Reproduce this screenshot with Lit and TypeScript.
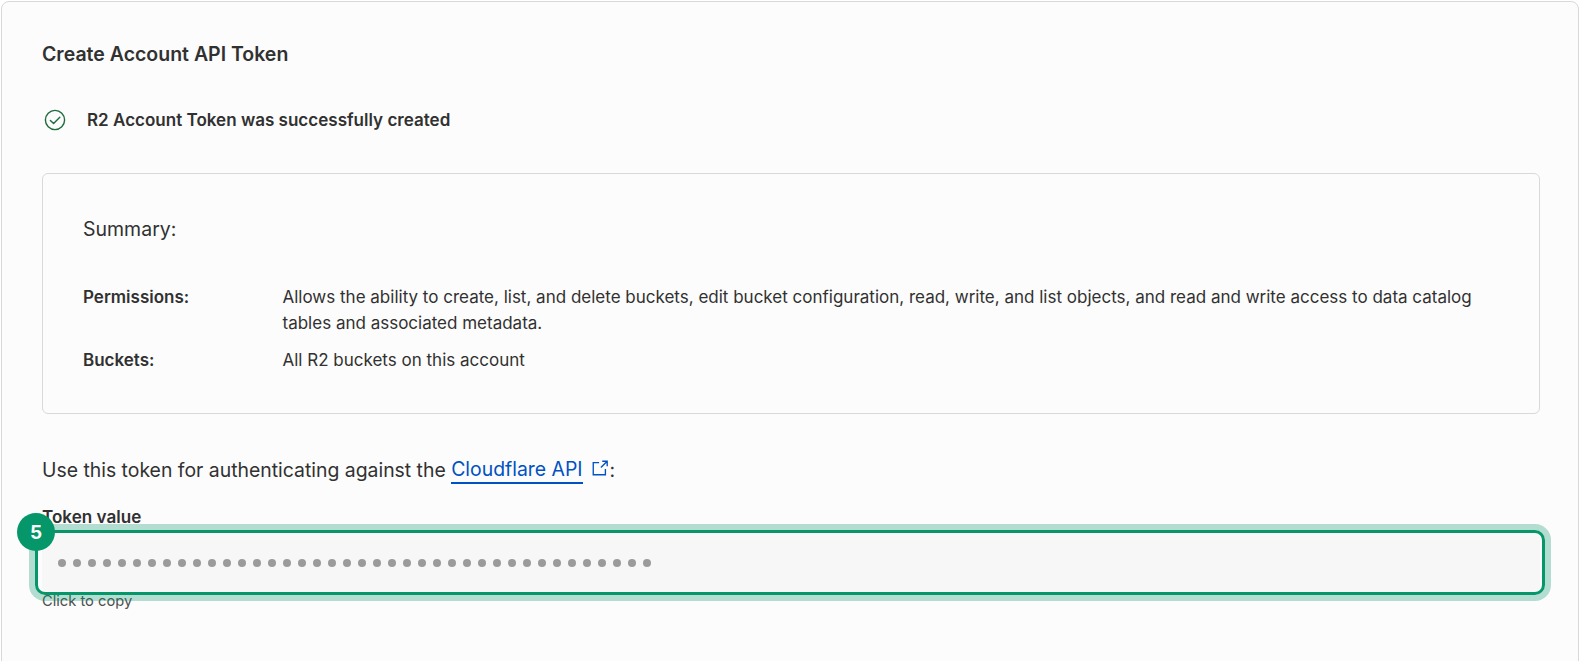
import { LitElement, html, css, svg } from "lit";
import { customElement } from "lit/decorators.js";

@customElement("app-root")
export class AppRoot extends LitElement {
  static styles = css`
    :host { display: block; height: 661px; overflow: hidden; background: #fff; font-family: Inter, "Liberation Sans", sans-serif; color: #313131; }
    * { box-sizing: border-box; }
    .card { margin: 1px 1px 0 1px; height: 680px; border: 1px solid #d9d9d9; border-radius: 8px; background: #fcfcfc; padding: 39px 38px 0 40px; display: flex; flex-direction: column; }
    h1 { margin: 0; font-size: 19.5px; line-height: 26px; font-weight: 600; }
    .success { margin-top: 40px; display: flex; align-items: center; gap: 22px; font-size: 17.05px; font-weight: 600; line-height: 26px; padding-left: 2px; }
    .success span { margin-left: -1px; }
    .success svg { width: 22px; height: 22px; flex: none; margin-top: -1px; }
    .summary { margin-top: 40px; height: 241px; border: 1px solid #d9d9d9; border-radius: 6px; padding: 42px 40px 0 40px; }
    .summary h2 { margin: 0; font-size: 19.5px; line-height: 26px; font-weight: 400; }
    .rows { margin-top: 42px; display: grid; grid-template-columns: 199.5px 1fr; row-gap: 11px; font-size: 17px; line-height: 26px; }
    .rows .k { font-weight: 600; }
    .rows .v { max-width: 1230px; }
    .use { margin-top: 42px; font-size: 19.4px; line-height: 28px; display: flex; align-items: center; white-space: pre; }
    .use a { color: #0051c3; text-decoration: none; border-bottom: 2px solid #0051c3; line-height: 26px; }
    .use svg { width: 18px; height: 18px; margin: -4px 1px 0 8px; color: #0051c3; }
    .label { margin-top: 22px; font-size: 17.1px; font-weight: 600; line-height: 22px; }
    .field { position: relative; margin-top: 5px; height: 60px; background: #f7f7f7; border-radius: 6px; padding-left: 16px; display: flex; align-items: center; }
    .dots { display: flex; gap: 7px; }
    .dots i { width: 8px; height: 8px; border-radius: 50%; background: #9b9b9b; display: block; }
    .hint { margin-top: -2px; font-size: 14.7px; line-height: 20px; color: #4e4e4e; }
    .ring { position: absolute; left: -7px; right: -5px; top: -3px; bottom: -2px; border: 3px solid #059669; border-radius: 10px; box-shadow: 0 0 0 6px rgba(5,150,105,0.3); pointer-events: none; }
    .badge { position: absolute; left: -25px; top: -20px; width: 38px; height: 38px; border-radius: 50%; background: #059669; color: #fff; font-size: 19px; font-weight: 700; display: flex; align-items: center; justify-content: center; }
  `;

  render() {
    return html`
      <div class="card">
        <h1>Create Account API Token</h1>
        <div class="success">
          <svg viewBox="0 0 22 22" fill="none" stroke="#1e6b3c" stroke-width="1.4" stroke-linecap="round" stroke-linejoin="round">
            ${svg`<circle cx="11" cy="11" r="9.6"></circle><path d="M6.4 11.4 9.6 14.6 15.8 8.2"></path>`}
          </svg>
          <span>R2 Account Token was successfully created</span>
        </div>
        <section class="summary">
          <h2>Summary:</h2>
          <div class="rows">
            <div class="k">Permissions:</div>
            <div class="v">Allows the ability to create, list, and delete buckets, edit bucket configuration, read, write, and list objects, and read and write access to data catalog tables and associated metadata.</div>
            <div class="k">Buckets:</div>
            <div class="v">All R2 buckets on this account</div>
          </div>
        </section>
        <div class="use">Use this token for authenticating against the <a href="#">Cloudflare API</a><svg viewBox="0 0 20 20" fill="none" stroke="currentColor" stroke-width="1.5">
            ${svg`<path d="M9 4H2.5V17.5H16V11"></path><path d="M11 9.5 18 2.5M12.5 2.5H18V8"></path>`}
          </svg>:</div>
        <div class="label">Token value</div>
        <div class="field">
          <div class="dots">${Array.from({ length: 40 }, () => html`<i></i>`)}</div>
          <div class="ring"></div>
          <div class="badge">5</div>
        </div>
        <div class="hint">Click to copy</div>
      </div>
    `;
  }
}
